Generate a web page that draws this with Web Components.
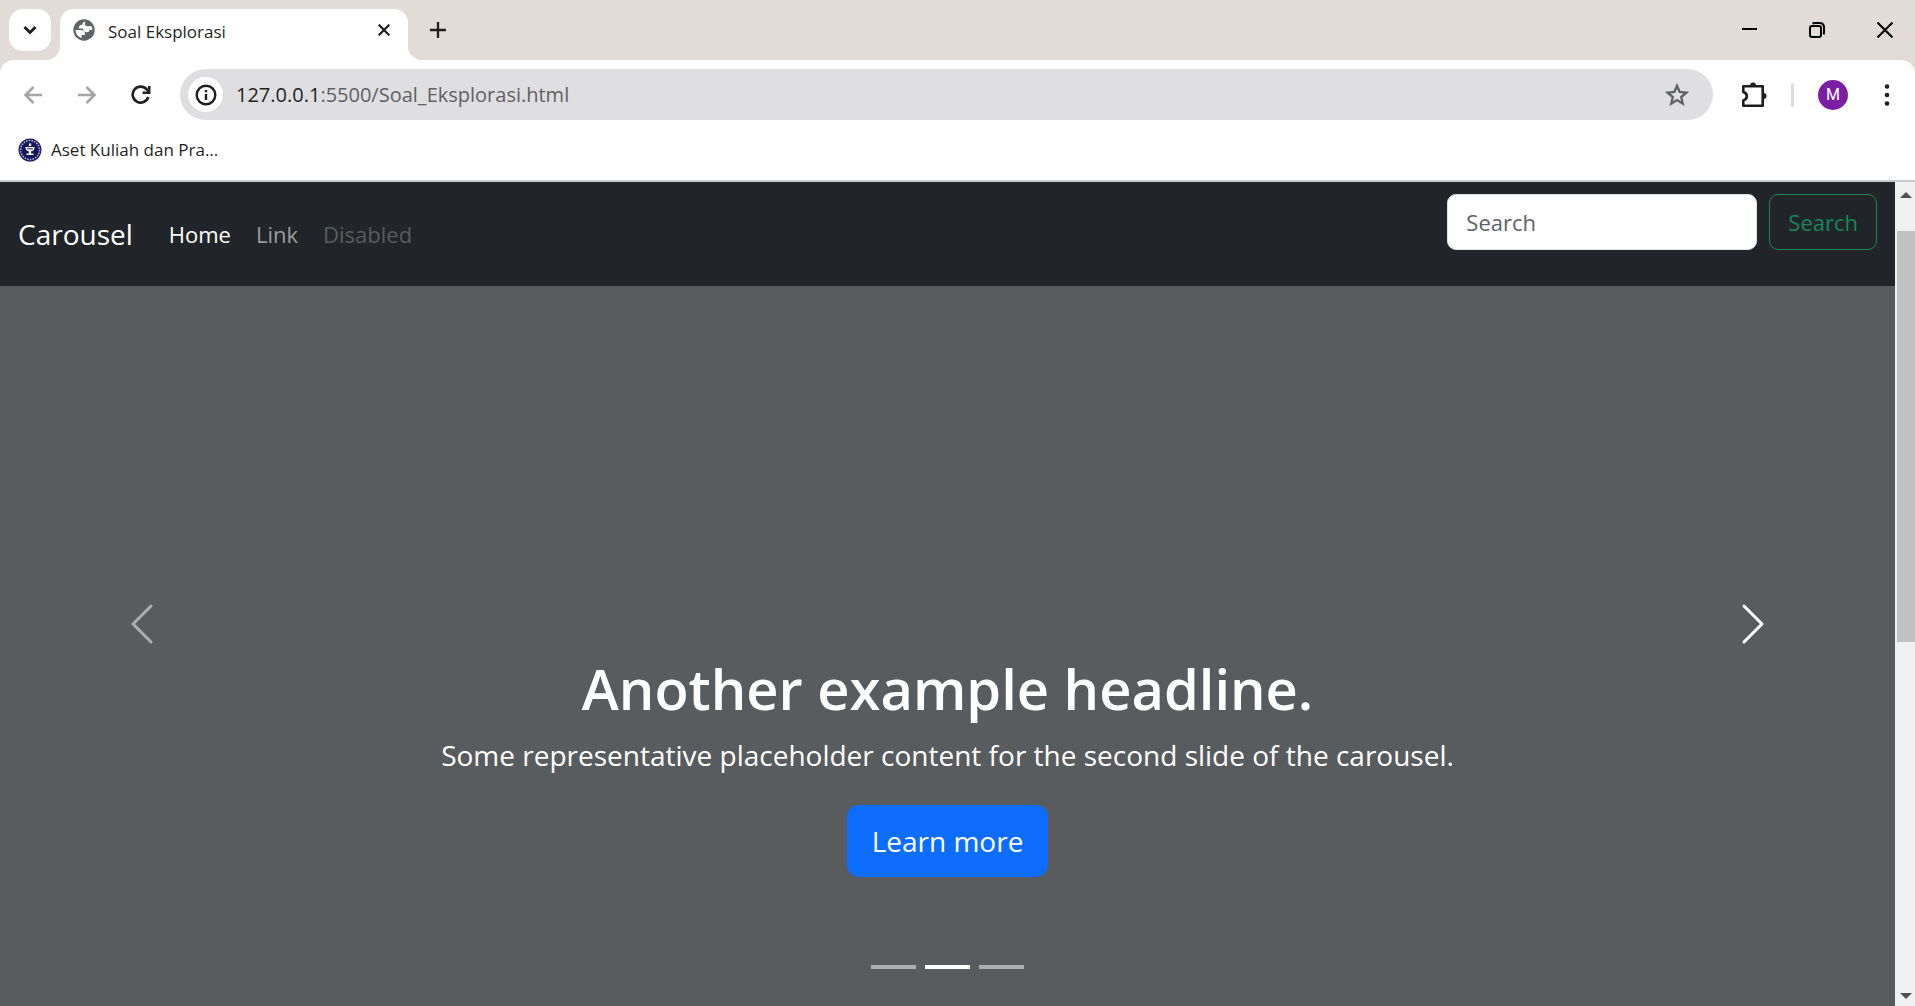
<!DOCTYPE html>
<html lang="id">
<head>
<meta charset="utf-8">
<title>Soal Eksplorasi</title>
<style>
html, body { height: 100%; margin: 0; }
body { font-family: "Open Sans", "Noto Sans", sans-serif; overflow: hidden; }
</style>
</head>
<body>
<browser-window>
  <tab-strip slot="tabs">Soal Eksplorasi</tab-strip>
  <tool-bar slot="toolbar" host="127.0.0.1" path=":5500/Soal_Eksplorasi.html"></tool-bar>
  <bookmark-bar slot="bookmarks">Aset Kuliah dan Pra...</bookmark-bar>
  <site-navbar>Carousel</site-navbar>
  <site-carousel>
    <span slot="headline">Another example headline.</span>
    <span slot="text">Some representative placeholder content for the second slide of the carousel.</span>
    <span slot="action">Learn more</span>
  </site-carousel>
</browser-window>

<script>
const RESET = `
  :host, *, *::before, *::after { box-sizing: border-box; }
  button { font: inherit; color: inherit; background: none; border: 0; padding: 0; margin: 0; display: grid; place-items: center; cursor: pointer; }
  a { color: inherit; text-decoration: none; }
  svg { display: block; }
`;

function define(name, template) {
  customElements.define(name, class extends HTMLElement {
    constructor() {
      super();
      this.attachShadow({ mode: "open" });
    }
    connectedCallback() {
      this.shadowRoot.innerHTML = `<style>${RESET}</style>` + template(this);
    }
  });
}

/* Window frame: tab strip, toolbar, bookmarks and the scrolling viewport */
define("browser-window", () => `
  <style>
    :host { display: flex; flex-direction: column; height: 100%; background: #e3dbd8; }
    .chrome { background: #fff; border-radius: 14px 14px 0 0; border-bottom: 2px solid #c8cacb; }
    .viewport { flex: 1; min-height: 0; display: flex; }
    main { flex: 1; min-width: 0; display: flex; flex-direction: column; }
  </style>
  <slot name="tabs"></slot>
  <div class="chrome"><slot name="toolbar"></slot><slot name="bookmarks"></slot></div>
  <div class="viewport"><main><slot></slot></main><page-scrollbar></page-scrollbar></div>
`);

define("tab-strip", () => `
  <style>
    :host { display: flex; height: 60px; padding: 9px 0 0 9px; color: #1f1f1f; }
    .picker { width: 42px; height: 42px; border-radius: 14px; background: #fff; margin-right: 9px; }
    .tab { position: relative; display: flex; align-items: center; width: 348px; height: 51px; padding: 0 12px 9px 13px; background: #fff; border-radius: 14px 14px 0 0; }
    .tab::before, .tab::after { content: ""; position: absolute; bottom: 0; width: 14px; height: 14px; }
    .tab::before { right: 100%; background: radial-gradient(circle at 0 0, transparent 14px, #fff 14px); }
    .tab::after { left: 100%; background: radial-gradient(circle at 100% 0, transparent 14px, #fff 14px); }
    .title { flex: 1; margin-left: 13px; padding-top: 3px; font-size: 17px; line-height: 24px; }
    .close { width: 24px; height: 24px; }
    .new { width: 42px; height: 42px; margin-left: 9px; }
    .window { display: flex; gap: 8px; margin-left: auto; color: #000; }
    .window button { width: 60px; height: 42px; }
  </style>
  <button class="picker" aria-label="Search tabs">
    <svg width="14" height="10" viewBox="0 0 14 10" fill="none" stroke="currentColor" stroke-width="3"><path d="M1.500 2 7 7.500 12.500 2"/></svg>
  </button>
  <div class="tab">
    <svg width="22" height="22" viewBox="0 0 22 22"><circle cx="11" cy="11" r="10.700" fill="#5f6368"/><path fill="#fff" d="M12.300 2.600C10.300 2.900 9.300 4.100 9.300 5.800 7 5.800 5.600 7.200 5.900 9.600H10C10.200 12 11.400 13.200 13.600 13.200 15.500 13.200 16.400 12.200 16.400 10.900H19.400A8.500 8.500 0 0 0 18.600 7.300H14.600C12.800 7.300 12 6.500 12 5.100Z"/><path fill="#fff" d="M2.600 11H7C10.500 11 12.200 12.700 11.900 15.900H8.600V19A8.500 8.500 0 0 1 2.600 11Z"/></svg>
    <span class="title"><slot></slot></span>
    <button class="close" aria-label="Close tab">
      <svg width="12" height="12" viewBox="0 0 12 12" stroke="currentColor" stroke-width="2.200"><path d="M.7.7 11.300 11.300M11.300.7.7 11.300"/></svg>
    </button>
  </div>
  <button class="new" aria-label="New tab">
    <svg width="16" height="16" viewBox="0 0 16 16" stroke="currentColor" stroke-width="2.300"><path d="M8 0V16M0 8H16"/></svg>
  </button>
  <div class="window">
    <button aria-label="Minimize"><svg width="15" height="16" viewBox="0 0 15 16" stroke="currentColor" stroke-width="2"><path d="M0 7H15"/></svg></button>
    <button aria-label="Restore"><svg width="16" height="16" viewBox="0 0 16 16" fill="none" stroke="currentColor" stroke-width="2"><rect x="1" y="4" width="11" height="11" rx="2"/><path d="M3.500 1.500Q4.500 1 6 1H10.500Q15 1 15 5.500V10Q15 11.500 14.500 12.500"/></svg></button>
    <button aria-label="Close"><svg width="16" height="16" viewBox="0 0 16 16" stroke="currentColor" stroke-width="2"><path d="M.5.5 15.500 15.500M15.500.5.5 15.500"/></svg></button>
  </div>
`);

define("tool-bar", el => `
  <style>
    :host { display: flex; align-items: center; height: 69px; padding: 0 1px 0 6px; color: #1f1f1f; }
    button { width: 54px; height: 51px; }
    .off { color: #a5a5a5; }
    .address { flex: 1; display: flex; align-items: center; height: 51px; margin: 0 14px 0 12px; padding: 0 9px 0 8px; border-radius: 26px; background: #dfdfe1; font-size: 20px; line-height: 28px; color: #5f6163; }
    .address .info { width: 35px; height: 35px; border-radius: 50%; background: #fff; color: #1f1f1f; margin-right: 13px; }
    .address .url { flex: 1; }
    .address b { font-weight: 400; color: #1f1f1f; }
    .divider { width: 3px; height: 24px; border-radius: 2px; background: #e3dbd8; margin: 0 12px 0 10px; }
    .avatar { display: grid; place-items: center; width: 30px; height: 30px; border-radius: 50%; background: #7b1fa2; color: #fff; font: 16px/30px Roboto, sans-serif; }
  </style>
  <button class="off" aria-label="Back"><svg width="18" height="18" viewBox="0 0 18 18" fill="none" stroke="currentColor" stroke-width="2.500"><path d="M18 9H2M9.500 1 1.500 9 9.500 17"/></svg></button>
  <button class="off" aria-label="Forward"><svg width="18" height="18" viewBox="0 0 18 18" fill="none" stroke="currentColor" stroke-width="2.500"><path d="M0 9H16M8.500 1 16.500 9 8.500 17"/></svg></button>
  <button aria-label="Reload"><svg width="20" height="20" viewBox="0 0 20 20" fill="none" stroke="currentColor" stroke-width="2.600"><path d="M17.300 12A8 8 0 1 1 16 4.700L17.500 6.500"/><path d="M18.200 1V7.700H11.500" stroke-width="2.500"/></svg></button>
  <div class="address">
    <button class="info" aria-label="View site information"><svg width="22" height="22" viewBox="0 0 22 22" fill="none" stroke="currentColor" stroke-width="2.400"><circle cx="11" cy="11" r="9.300"/><path d="M11 10V16M11 6V8.300"/></svg></button>
    <span class="url"><b>${el.getAttribute("host")}</b>${el.getAttribute("path")}</span>
    <button aria-label="Bookmark this tab"><svg width="24" height="23" viewBox="0 0 24 23" fill="none" stroke="#5f6163" stroke-width="2.300"><path d="M12 2.800 14.600 9 21.400 9.600 16.200 14 17.800 20.700 12 17.100 6.200 20.700 7.800 14 2.600 9.600 9.400 9Z"/></svg></button>
  </div>
  <button aria-label="Extensions"><svg width="26" height="26" viewBox="0 0 26 26" fill="none" stroke="currentColor" stroke-width="2.600" stroke-linejoin="round"><path d="M2.300 4.300H21.700V23.700H2.300V18.500C7 17 7 11.500 2.300 10V4.300Z"/><path d="M9 3.500A3 3 0 0 1 15 3.500ZM22.500 11A3 3 0 0 1 22.500 17Z" fill="currentColor" stroke="none"/></svg></button>
  <span class="divider"></span>
  <button aria-label="Profile"><span class="avatar">M</span></button>
  <button aria-label="Menu"><svg width="6" height="22" viewBox="0 0 6 22" fill="currentColor"><circle cx="3" cy="2.500" r="2.300"/><circle cx="3" cy="11" r="2.300"/><circle cx="3" cy="19.500" r="2.300"/></svg></button>
`);

define("bookmark-bar", () => `
  <style>
    :host { display: flex; align-items: center; height: 51px; padding: 0 18px 9px; color: #1f1f1f; font-size: 17px; line-height: 24px; }
    a { display: flex; align-items: center; gap: 9px; }
  </style>
  <a href="#">
    <svg width="24" height="24" viewBox="0 0 24 24"><circle cx="12" cy="12" r="11.500" fill="#1b1c60"/><circle cx="12" cy="12" r="9.500" fill="none" stroke="#b9b9d4" stroke-width="1.500" stroke-dasharray="1.500 1.200"/><circle cx="12" cy="12" r="7.500" fill="#14155a"/><path fill="#fff" d="M10.800 5.500H13.200V8H10.800ZM7.300 9H16.700Q16.300 13 13 13.500V15.500H15.500V17H8.500V15.500H11V13.500Q7.700 13 7.300 9Z"/><path d="M9 10.800H15" stroke="#14155a"/></svg>
    <span><slot></slot></span>
  </a>
`);

define("page-scrollbar", () => `
  <style>
    :host { display: flex; flex-direction: column; align-items: center; width: 20px; padding: 10px 0 7px 2px; background: #f0f0f0; color: #505050; }
    .track { flex: 1; align-self: stretch; display: flex; flex-direction: column; padding: 33px 0 53px; }
    .thumb { flex: 0 0 58%; background: #c1c1c1; }
  </style>
  <svg width="12" height="6" viewBox="0 0 12 6" fill="currentColor"><path d="M0 6 6 0 12 6Z"/></svg>
  <div class="track"><div class="thumb"></div></div>
  <svg width="12" height="6" viewBox="0 0 12 6" fill="currentColor"><path d="M0 0H12L6 6Z"/></svg>
`);

define("site-navbar", () => `
  <style>
    :host { display: block; background: #212529; color: #fff; font-size: 22px; line-height: 36px; }
    nav { display: flex; height: 104px; padding: 12px 18px; }
    .brand { align-self: center; font-size: 28px; margin-right: 36px; }
    ul { display: flex; gap: 25px; align-self: center; list-style: none; margin: 0; padding: 0; }
    .link { color: #9b9d9e; }
    .disabled { color: #595c5f; }
    form { display: flex; gap: 12px; align-items: flex-start; margin-left: auto; }
    input { width: 310px; height: 56px; padding: 9px 18px; border: 1px solid #dee2e6; border-radius: 9px; background: #fff; font: inherit; color: #212529; }
    input::placeholder { color: #5d6267; opacity: 1; }
    form button { height: 56px; padding: 0 18px; border: 1px solid #198754; border-radius: 9px; color: #198754; }
  </style>
  <nav>
    <a class="brand" href="#"><slot></slot></a>
    <ul>
      <li><a href="#" aria-current="page">Home</a></li>
      <li><a class="link" href="#">Link</a></li>
      <li><a class="disabled" aria-disabled="true">Disabled</a></li>
    </ul>
    <form onsubmit="return false">
      <input type="search" placeholder="Search" aria-label="Search">
      <button type="submit">Search</button>
    </form>
  </nav>
`);

define("site-carousel", () => `
  <style>
    :host { flex: 1; min-height: 0; display: flex; background: #595c5e; color: #fff; }
    .control { width: 15%; padding-bottom: 44px; }
    .prev { opacity: .5; }
    .slide { flex: 1; display: flex; flex-direction: column; align-items: center; justify-content: flex-end; padding-bottom: 37px; text-align: center; }
    h1 { margin: 0 0 9px; font-size: 56px; line-height: 72px; font-weight: 600; }
    p { margin: 0 0 28px; font-size: 28px; line-height: 44px; }
    .action { display: grid; place-items: center; height: 72px; padding: 0 25px; border-radius: 12px; background: #0d6efd; font-size: 28px; line-height: 44px; }
    .indicators { display: flex; gap: 9px; margin-top: 88px; }
    .indicators button { width: 45px; height: 4px; background: #acaeaf; }
    .indicators .active { background: #fff; }
  </style>
  <button class="control prev" aria-label="Previous"><svg width="48" height="48" viewBox="0 0 16 16" fill="#fff"><path d="M11.354 1.646a.5.5 0 0 1 0 .708L5.707 8l5.647 5.646a.5.5 0 0 1-.708.708l-6-6a.5.5 0 0 1 0-.708l6-6a.5.5 0 0 1 .708 0z"/></svg></button>
  <div class="slide">
    <h1><slot name="headline"></slot></h1>
    <p><slot name="text"></slot></p>
    <a class="action" href="#"><slot name="action"></slot></a>
    <div class="indicators">
      <button aria-label="Slide 1"></button><button class="active" aria-label="Slide 2"></button><button aria-label="Slide 3"></button>
    </div>
  </div>
  <button class="control" aria-label="Next"><svg width="48" height="48" viewBox="0 0 16 16" fill="#fff"><path d="M4.646 1.646a.5.5 0 0 1 .708 0l6 6a.5.5 0 0 1 0 .708l-6 6a.5.5 0 0 1-.708-.708L10.293 8 4.646 2.354a.5.5 0 0 1 0-.708z"/></svg></button>
`);
</script>
</body>
</html>
